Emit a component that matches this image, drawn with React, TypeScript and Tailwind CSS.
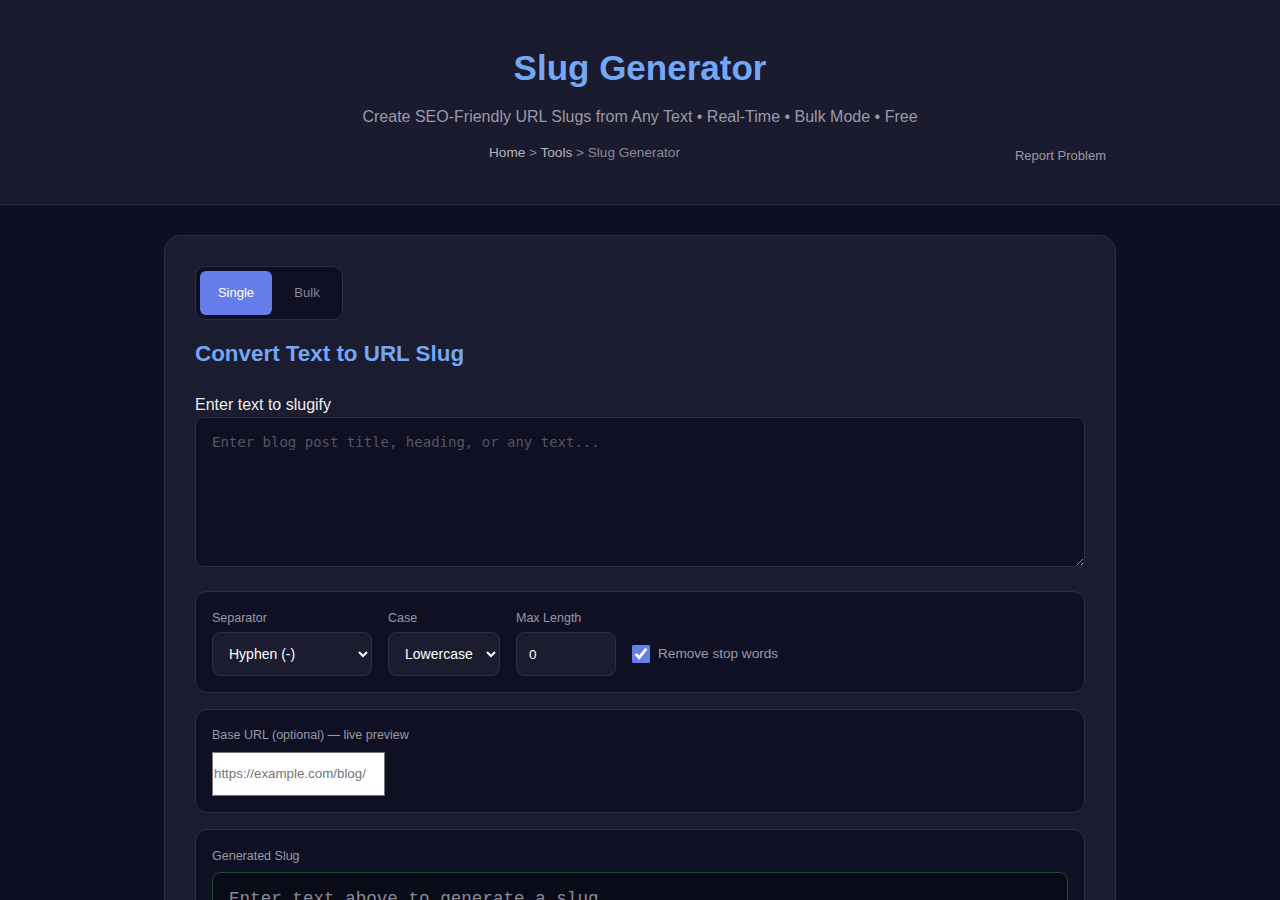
import React, { useState } from "react";

const sans = { fontFamily: '"Liberation Sans", Arial, sans-serif' };

export default function App() {
  const [mode, setMode] = useState<"single" | "bulk">("single");
  const [removeStop, setRemoveStop] = useState(true);

  return (
    <div className="min-h-[900px] bg-[#0f0f23] text-white" style={sans}>
      <header className="bg-[#1a1b2e] border-b border-[#2c2d4e] h-[205px]">
        <div className="pt-[45px] text-center">
          <h1 className="text-[35px] leading-[46px] font-bold text-[#74a7f6]">Slug Generator</h1>
          <p className="mt-[16px] text-[16px] leading-[20px] text-[#9a9aa6]">
            Create SEO-Friendly URL Slugs from Any Text • Real-Time • Bulk Mode • Free
          </p>
        </div>
        <div className="mx-auto w-[952px] flex items-start gap-[10px] mt-[18px] pr-[10px]">
          <nav className="flex-1 text-center text-[13.6px] leading-[16px] text-[#8a8a96]">
            <a className="text-[#b4b4be]">Home</a> &gt; <a className="text-[#b4b4be]">Tools</a> &gt; Slug Generator
          </nav>
          <a className="mt-[3px] text-[13px] leading-[16px] text-[#9a9aa6]">Report Problem</a>
        </div>
      </header>

      <main className="pt-[30px]">
        <section className="mx-auto w-[952px] rounded-[16px] border border-[#2c2d48] bg-[#1b1c2f] p-[30px]">
          <div className="inline-flex rounded-[10px] border border-[#2c2d48] bg-[#0f1023] p-[4px] gap-[4px]">
            <button
              onClick={() => setMode("single")}
              className={
                mode === "single"
                  ? "h-[44px] w-[72px] rounded-[6px] bg-[#667eea] text-[13px] text-white"
                  : "h-[44px] w-[72px] rounded-[6px] text-[13px] text-[#8a8a96]"
              }
            >
              Single
            </button>
            <button
              onClick={() => setMode("bulk")}
              className={
                mode === "bulk"
                  ? "h-[44px] w-[62px] rounded-[6px] bg-[#667eea] text-[13px] text-white"
                  : "h-[44px] w-[62px] rounded-[6px] text-[13px] text-[#8a8a96]"
              }
            >
              Bulk
            </button>
          </div>

          <h2 className="mt-[20px] text-[22.4px] leading-[28px] font-bold text-[#74a7f6]">Convert Text to URL Slug</h2>

          <label className="block mt-[27px] text-[16px] leading-[20px] text-[#eeeeee]">Enter text to slugify</label>
          <textarea
            className="mt-[2px] block w-full h-[150px] rounded-[8px] border border-[#2c2d48] bg-[#0f1023] px-[16px] py-[14px] text-[14px] leading-[20px] text-[#ddd] placeholder-[#55555f] outline-none"
            style={{ fontFamily: '"DejaVu Sans Mono", monospace' }}
            placeholder="Enter blog post title, heading, or any text..."
          />

          <div className="mt-[24px] rounded-[12px] border border-[#2c2d48] bg-[#0f1023] px-[16px] pt-[19px] pb-[16px]">
            <div className="flex items-end gap-[16px]">
              <div className="flex flex-col">
                <span className="text-[12.5px] leading-[15px] text-[#9a9aa6]">Separator</span>
                <select className="mt-[6px] h-[44px] w-[160px] rounded-[8px] border border-[#2c2d48] bg-[#1b1c2f] pl-[12px] pr-[8px] text-[14px] text-white outline-none">
                  <option>Hyphen (-)</option>
                  <option>Underscore (_)</option>
                  <option>Dot (.)</option>
                </select>
              </div>
              <div className="flex flex-col">
                <span className="text-[12.5px] leading-[15px] text-[#9a9aa6]">Case</span>
                <select className="mt-[6px] h-[44px] w-[112px] rounded-[8px] border border-[#2c2d48] bg-[#1b1c2f] pl-[12px] pr-[4px] text-[14px] text-white outline-none">
                  <option>Lowercase</option>
                  <option>Uppercase</option>
                </select>
              </div>
              <div className="flex flex-col">
                <span className="text-[12.5px] leading-[15px] text-[#9a9aa6]">Max Length</span>
                <input
                  defaultValue="0"
                  className="mt-[6px] h-[44px] w-[100px] rounded-[8px] border border-[#2c2d48] bg-[#1b1c2f] px-[12px] text-[13.5px] text-white outline-none"
                />
              </div>
              <label className="flex h-[44px] items-center gap-[8px] text-[13.6px] text-[#9a9aa6]">
                <input
                  type="checkbox"
                  checked={removeStop}
                  onChange={(e) => setRemoveStop(e.target.checked)}
                  className="h-[18px] w-[18px] accent-[#667eea]"
                />
                Remove stop words
              </label>
            </div>
          </div>

          <div className="mt-[16px] rounded-[12px] border border-[#2c2d48] bg-[#0f1023] px-[16px] pt-[18px] pb-[16px]">
            <span className="block text-[12.5px] leading-[15px] text-[#9a9aa6]">Base URL (optional) — live preview</span>
            <input
              className="mt-[9px] block h-[44px] w-[173px] border border-[#767676] bg-white px-[1px] pb-[2px] text-[13.333px] text-black placeholder-[#757575]"
              placeholder="https://example.com/blog/"
            />
          </div>

          <div className="mt-[16px] rounded-[12px] border border-[#2c2d48] bg-[#0f1023] px-[16px] pt-[19px] pb-[16px]">
            <span className="block text-[12.5px] leading-[15px] text-[#9a9aa6]">Generated Slug</span>
            <div
              className="mt-[8px] rounded-[8px] border border-[#1f4a2e] bg-[#0a0b18] px-[16px] pt-[14px] pb-[12px] text-[17.6px] leading-[24px] text-[#8a8a96]"
              style={{ fontFamily: '"Liberation Mono", "DejaVu Sans Mono", monospace' }}
            >
              Enter text above to generate a slug
            </div>
          </div>
        </section>
      </main>
    </div>
  );
}
